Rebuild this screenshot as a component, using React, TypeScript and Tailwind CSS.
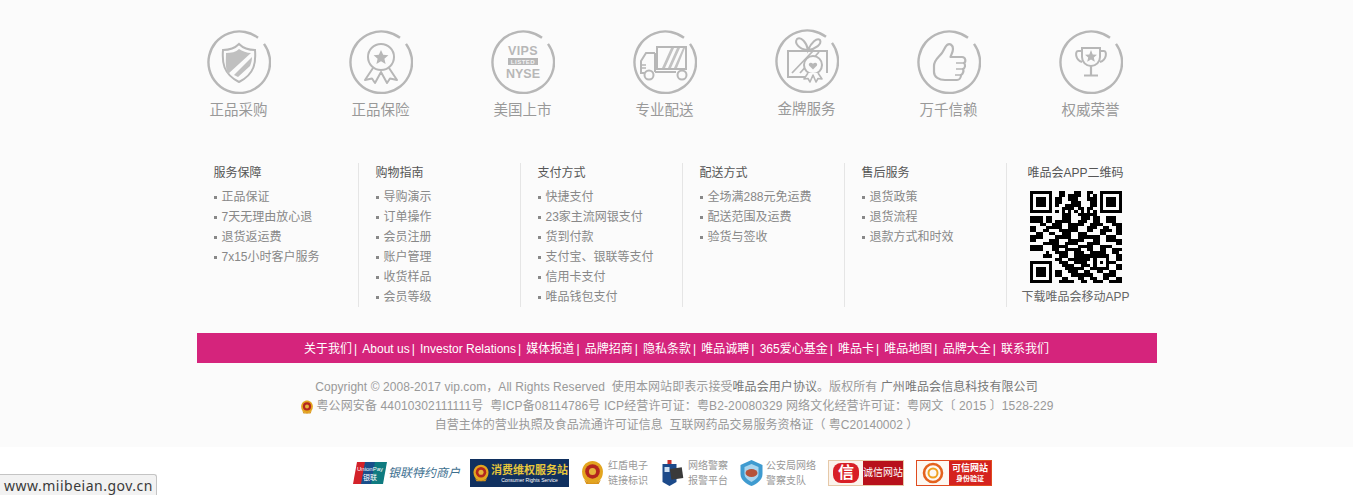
const font = "font-['Liberation_Sans','Noto_Sans_CJK_SC',sans-serif]";

function Ring({ children }: { children?: React.ReactNode }) {
  return (
    <svg width="64" height="64" viewBox="0 0 64 64" fill="none" stroke="#b7b7b7" strokeWidth="2">
      <path d="M51 7.8 A30.8 30.8 0 1 0 57 13.9" strokeWidth="2.4" />
      {children}
    </svg>
  );
}

const shieldIcon = (
  <Ring>
    <path d="M32 14 C36 18 42 20 48 20 C49 32 48 44 32 52 C16 44 15 32 16 20 C22 20 28 18 32 14Z" strokeWidth="2" />
    <path d="M32 19 C35 21 40 23 44 23 L21 44 C18 38 19 30 19 23 C24 23 29 22 32 19Z" fill="#c0c0c0" stroke="none" />
    <path d="M45 27 C45 31 44 33 43 36 L31 47 L27 45Z" fill="#c0c0c0" stroke="none" />
  </Ring>
);

const medalIcon = (
  <Ring>
    <circle cx="32" cy="27" r="13" strokeWidth="2" />
    <path d="M32 20 L34.2 24.8 L39.4 25.3 L35.4 28.8 L36.6 34 L32 31.2 L27.4 34 L28.6 28.8 L24.6 25.3 L29.8 24.8Z" fill="#b7b7b7" stroke="none" />
    <path d="M24 38 L16 50 L23 48.5 L26 53 L32 42 L38 53 L41 48.5 L48 50 L40 38" strokeWidth="2" strokeLinejoin="round" />
  </Ring>
);

const nyseIcon = (
  <Ring>
    <g stroke="none" fill="#b7b7b7" fontFamily="'Liberation Sans',sans-serif" fontWeight="700" textAnchor="middle">
      <text x="32" y="25" fontSize="12.5" letterSpacing="0.4">VIPS</text>
      <rect x="17" y="28" width="30" height="7" />
      <text x="32" y="34" fontSize="6" fill="#f4f4f4" letterSpacing="0.5">LISTED</text>
      <text x="32" y="47.5" fontSize="12.5">NYSE</text>
    </g>
  </Ring>
);

const truckIcon = (
  <Ring>
    <path d="M24 17 H53 V39 H24Z" strokeWidth="2" />
    <path d="M29 38 L38 18 H41 L32 38Z M35 38 L44 18 H47 L38 38Z M41 38 L50 18 H52 L44 38Z" fill="#c2c2c2" stroke="none" />
    <path d="M22 23 H13 L8 31 V43 H12" strokeWidth="2" />
    <path d="M8 35 H13 M8 38 H13" strokeWidth="1.5" />
    <path d="M22 23 V42 M22 42 H43" strokeWidth="2" />
    <circle cx="16" cy="45" r="4.5" strokeWidth="2" />
    <circle cx="49" cy="45" r="4.5" strokeWidth="2" />
  </Ring>
);

const giftIcon = (
  <Ring>
    <path d="M32 21 C24 20 19 14 22 10 C26 7 32 14 33 21 C36 14 42 8 45 11 C47 15 41 20 33 21" strokeWidth="2" />
    <path d="M38 48 H13 V22 H52 V44" strokeWidth="2" />
    <path d="M17 44 L38 22 M25 44 L44 23" strokeWidth="1.8" />
    <circle cx="38" cy="36" r="9" strokeWidth="2" fill="#fbfbfb" />
    <path d="M38 40.5 L34 36.5 C33 34 36 32.5 38 34.8 C40 32.5 43 34 42 36.5Z" fill="#b7b7b7" stroke="none" />
    <path d="M33 44 L29 50 L33 49.5 L35 53 L38 46 L41 53 L43 49.5 L47 50 L43 44" strokeWidth="1.6" strokeLinejoin="round" fill="#fbfbfb" />
  </Ring>
);

const thumbIcon = (
  <Ring>
    <path
      d="M17 36 C17 30 21 28 25 23 C27 20 28 17 30 15 C33 13 36 15 36 19 C36 22 34 25 33.5 27 H45 C49 27 49 32 47 33 C49 35 48 38 46 39 C47 41 46 44 44 45 C44 48 42 50 40 50 H28 C22 50 17 47 17 42Z"
      strokeWidth="2.2"
      strokeLinejoin="round"
    />
    <path d="M39 33 H47 M39 39 H46 M38 45 H44" strokeWidth="1.5" />
  </Ring>
);

const trophyIcon = (
  <Ring>
    <path d="M23 18 H41 V27 C41 32 37 36 32 36 C27 36 23 32 23 27Z" strokeWidth="2" />
    <path d="M23 21 H19 C16 21 16 30 23 32 M41 21 H45 C48 21 48 30 41 32" strokeWidth="2" />
    <path d="M32 36 V45 M25 45.5 H39" strokeWidth="2.2" />
    <path d="M32 20 L33.7 24.4 L38 24.8 L34.8 27.5 L35.8 31.8 L32 29.5 L28.2 31.8 L29.2 27.5 L26 24.8 L30.3 24.4Z" fill="#b7b7b7" stroke="none" />
  </Ring>
);

const promises = [
  { icon: shieldIcon, label: "正品采购" },
  { icon: medalIcon, label: "正品保险" },
  { icon: nyseIcon, label: "美国上市" },
  { icon: truckIcon, label: "专业配送" },
  { icon: giftIcon, label: "金牌服务", lifted: true },
  { icon: thumbIcon, label: "万千信赖" },
  { icon: trophyIcon, label: "权威荣誉" },
];

const helpColumns = [
  { title: "服务保障", items: ["正品保证", "7天无理由放心退", "退货返运费", "7x15小时客户服务"] },
  { title: "购物指南", items: ["导购演示", "订单操作", "会员注册", "账户管理", "收货样品", "会员等级"] },
  { title: "支付方式", items: ["快捷支付", "23家主流网银支付", "货到付款", "支付宝、银联等支付", "信用卡支付", "唯品钱包支付"] },
  { title: "配送方式", items: ["全场满288元免运费", "配送范围及运费", "验货与签收"] },
  { title: "售后服务", items: ["退货政策", "退货流程", "退款方式和时效"] },
];

const navLinks = ["关于我们", "About us", "Investor Relations", "媒体报道", "品牌招商", "隐私条款", "唯品诚聘", "365爱心基金", "唯品卡", "唯品地图", "品牌大全", "联系我们"];

const qrRows = [
  "11111110011000110011000111111",
  "10000010011011110010100100001",
  "10111010110011100011100101110",
  "10111010110001110001100101110",
  "10111010100111110001100101110",
  "10000010001111011011000100001",
  "11111110101010101010101111111",
  "00000000001110011111100000000",
  "11110110001110001110110011100",
  "11110110111110011100110011100",
  "00011001110011111001111000111",
  "11000111110011100011100110011",
  "11001100011111100011001111011",
  "00110011001110011100001100011",
  "11110000111110011111110011100",
  "11000011100011111000110011111",
  "00001111100111100011110000011",
  "11110001111100011111001111000",
  "11110001100111110011001100111",
  "00000100111100111001111100110",
  "00001110011100111111111110011",
  "00000000110011111110100010011",
  "11111110011100111100101011100",
  "10000010001111001110100010011",
  "10111010000111111001111110011",
  "10111010110011100110011001100",
  "10111010110001111111000111100",
  "10000010001100011001100110011",
  "11111110011111001100111001111",
];

function isFinder(x: number, y: number) {
  return (x < 8 && y < 8) || (x > 20 && y < 8) || (x < 8 && y > 20);
}

function finderCell(x: number, y: number) {
  const fx = x > 20 ? x - 22 : x;
  const fy = y > 20 ? y - 22 : y;
  if (fx < 0 || fy < 0 || fx > 6 || fy > 6) return false;
  return fx === 0 || fx === 6 || fy === 0 || fy === 6 || (fx > 1 && fx < 5 && fy > 1 && fy < 5);
}

function QrCode() {
  return (
    <svg width="92" height="92" viewBox="0 0 29 29" shapeRendering="crispEdges" className="mx-auto">
      {qrRows.map((row, y) =>
        row.split("").map((c, x) => {
          const on = isFinder(x, y) ? finderCell(x, y) : c === "1";
          return on ? <rect key={x + "-" + y} x={x} y={y} width="1" height="1" fill="#000" /> : null;
        })
      )}
    </svg>
  );
}

function Emblem({ size }: { size: number }) {
  return (
    <svg width={size} height={size} viewBox="0 0 24 24" className="shrink-0">
      <path d="M12 1 C17 1 22 5 22 11 C22 16 20 19 17 21 L12 23 L7 21 C4 19 2 16 2 11 C2 5 7 1 12 1Z" fill="#e3a51f" />
      <circle cx="12" cy="11" r="7" fill="#b3261e" />
      <circle cx="12" cy="11" r="3.4" fill="#e7b43a" />
      <path d="M4 19 C8 23 16 23 20 19 L18 23 H6Z" fill="#d9941b" />
    </svg>
  );
}

function TwoLineBadge({ icon, top, bottom }: { icon: React.ReactNode; top: string; bottom: string }) {
  return (
    <div className="flex items-center gap-[3px] h-[29px]">
      {icon}
      <div className="text-[10px] leading-[15px] text-[#999] whitespace-nowrap">
        <div>{top}</div>
        <div>{bottom}</div>
      </div>
    </div>
  );
}

function TrustBadges() {
  return (
    <div className="flex justify-center items-center h-[48px] bg-white pt-[3px] pr-[8px]">
      <div className="flex items-center w-[107px] mr-[10px]">
        <svg width="34" height="22" viewBox="0 0 34 22" className="shrink-0 mr-[1px]">
          <path d="M4 0 H14 L10 22 H0Z" fill="#d3222a" />
          <path d="M12 0 H24 L20 22 H8Z" fill="#1a4f8b" />
          <path d="M22 0 H34 L30 22 H18Z" fill="#0f7b80" />
          <text x="17" y="9" fontSize="6" fill="#fff" textAnchor="middle" fontFamily="'Liberation Sans',sans-serif">UnionPay</text>
          <text x="17" y="18" fontSize="7" fill="#fff" textAnchor="middle" fontFamily="'Noto Sans CJK SC',sans-serif">银联</text>
        </svg>
        <span className="text-[12px] italic text-[#3d6f8f] whitespace-nowrap">银联特约商户</span>
      </div>
      <div className="flex items-center w-[99px] h-[28px] bg-[#10305f] mr-[11px] pl-[2px] overflow-hidden">
        <Emblem size={18} />
        <div className="ml-[1px] flex flex-col items-center leading-none">
          <span className="text-[11px] font-bold text-[#e6c63b] leading-[14px] whitespace-nowrap">消费维权服务站</span>
          <span className="text-[5px] text-white leading-[6px] whitespace-nowrap">Consumer Rights Service</span>
        </div>
      </div>
      <div className="w-[67px] mr-[11px]">
        <TwoLineBadge icon={<Emblem size={25} />} top="红盾电子" bottom="链接标识" />
      </div>
      <div className="w-[71px] mr-[11px]">
        <TwoLineBadge
          icon={
            <svg width="27" height="26" viewBox="0 0 24 26" className="shrink-0">
              <rect x="8" y="0" width="4" height="4" fill="#c9302c" />
              <path d="M3 4 H17 V22 L10 26 L3 22Z" fill="#1c4a8a" />
              <rect x="11" y="8" width="12" height="11" fill="#3a3a3a" transform="rotate(-8 17 13)" />
              <rect x="5" y="7" width="5" height="5" fill="#cfe0f2" />
            </svg>
          }
          top="网络警察"
          bottom="报警平台"
        />
      </div>
      <div className="w-[76px] mr-[12px]">
        <TwoLineBadge
          icon={
            <svg width="23" height="26" viewBox="0 0 22 26" className="shrink-0">
              <path d="M11 0 L22 5 V14 C22 20 16 24 11 26 C6 24 0 20 0 14 V5Z" fill="#3f9bd0" />
              <path d="M11 4 L18 7 V14 C18 18 14 20 11 22 C8 20 4 18 4 14 V7Z" fill="#a9d5ee" />
              <ellipse cx="11" cy="13" rx="6" ry="4" fill="#b5533a" />
            </svg>
          }
          top="公安局网络"
          bottom="警察支队"
        />
      </div>
      <div className="flex w-[76px] h-[26px] border border-[#e6c9a8] mr-[12px]">
        <div className="flex items-center justify-center w-[34px] bg-[#fbf3ec]">
          <span className="flex items-center justify-center w-[26px] h-[20px] rounded-[8px] bg-[#d81f26] text-white text-[16px] font-bold leading-none">信</span>
        </div>
        <div className="flex-1 flex items-center justify-center bg-[#b8111b] text-white text-[10px] whitespace-nowrap">诚信网站</div>
      </div>
      <div className="flex w-[76px] h-[26px] border border-[#e04b1f]">
        <div className="flex items-center justify-center w-[32px] bg-[#fdf8f2]">
          <svg width="22" height="22" viewBox="0 0 22 22" fill="none">
            <circle cx="11" cy="11" r="9" stroke="#e4611d" strokeWidth="2.6" />
            <circle cx="11" cy="11" r="4.5" stroke="#efa120" strokeWidth="2" />
          </svg>
        </div>
        <div className="flex-1 flex flex-col items-center justify-center bg-[#d5231f] text-white font-bold">
          <span className="text-[9px] leading-[12px] whitespace-nowrap">可信网站</span>
          <span className="text-[7px] leading-[9px] whitespace-nowrap">身份验证</span>
        </div>
      </div>
    </div>
  );
}

export default function App() {
  return (
    <div className={`relative h-[495px] overflow-hidden bg-[#fbfbfb] ${font}`}>
      <div className="w-[960px] mx-auto">
        <div className="flex gap-[56px] pt-[30px] -ml-[1px]">
          {promises.map((p) => (
            <div key={p.label} className={`w-[86px] flex flex-col items-center ${p.lifted ? "-mt-[1px]" : ""}`}>
              {p.icon}
              <div className="mt-[6px] text-[14.5px] leading-[20px] text-[#999] whitespace-nowrap">{p.label}</div>
            </div>
          ))}
        </div>

        <div className="flex mt-[43px] h-[144px]">
          {helpColumns.map((col) => (
            <div key={col.title} className="w-[162px] pl-[16px] pt-[1px] border-r border-[#e5e5e5]">
              <h4 className="pl-[1px] text-[12px] leading-[18px] text-[#555] font-normal">{col.title}</h4>
              <ul className="mt-[5px]">
                {col.items.map((item) => (
                  <li key={item} className="flex items-center h-[20px] text-[12px] text-[#888] whitespace-nowrap">
                    <span className="w-[3px] h-[3px] bg-[#888] ml-[1px] mr-[5px]" />
                    {item}
                  </li>
                ))}
              </ul>
            </div>
          ))}
          <div className="w-[136px] ml-[1px] pt-[1px] text-center text-[12px]">
            <h4 className="leading-[18px] text-[#555] font-normal">唯品会APP二维码</h4>
            <div className="mt-[9px]"><QrCode /></div>
            <p className="mt-[5px] leading-[18px] text-[#666] whitespace-nowrap">下载唯品会移动APP</p>
          </div>
        </div>

        <div className="flex justify-center items-center h-[30px] mt-[26px] pt-[1px] bg-[#d5247c] text-white text-[12px] whitespace-nowrap">
          {navLinks.map((link, i) => (
            <span key={link}>
              {link}
              {i < navLinks.length - 1 && <span className="ml-[2px] mr-[5.2px]">|</span>}
            </span>
          ))}
        </div>
      </div>

      <div className="pt-[15px] h-[84px] text-center text-[12px] leading-[19px] text-[#999] whitespace-nowrap">
        <p className="tracking-[0.07px]">Copyright © 2008-2017 vip.com，All Rights Reserved&nbsp; 使用本网站即表示接受<span className="text-[#777]">唯品会用户协议</span>。版权所有 <span className="text-[#777]">广州唯品会信息科技有限公司</span></p>
        <p className="flex items-center justify-center tracking-[0.12px]">
          <span className="mr-[3px]"><Emblem size={14} /></span>
          粤公网安备 44010302111111号&nbsp; 粤ICP备08114786号 ICP经营许可证：粤B2-20080329 网络文化经营许可证：粤网文〔 2015 〕1528-229
        </p>
        <p>自营主体的营业执照及食品流通许可证信息&nbsp; 互联网药品交易服务资格证（ 粤C20140002 ）</p>
      </div>

      <TrustBadges />

      <div className="absolute left-0 bottom-0 w-[157px] h-[21px] px-[4px] bg-[#f2f2f2] border-t border-r border-[#c4c4c4] rounded-tr-[3px] text-[14px] leading-[22px] tracking-[0.5px] text-[#3a3a3a] font-['Noto_Sans',sans-serif] whitespace-nowrap">
        www.miibeian.gov.cn
      </div>
    </div>
  );
}
